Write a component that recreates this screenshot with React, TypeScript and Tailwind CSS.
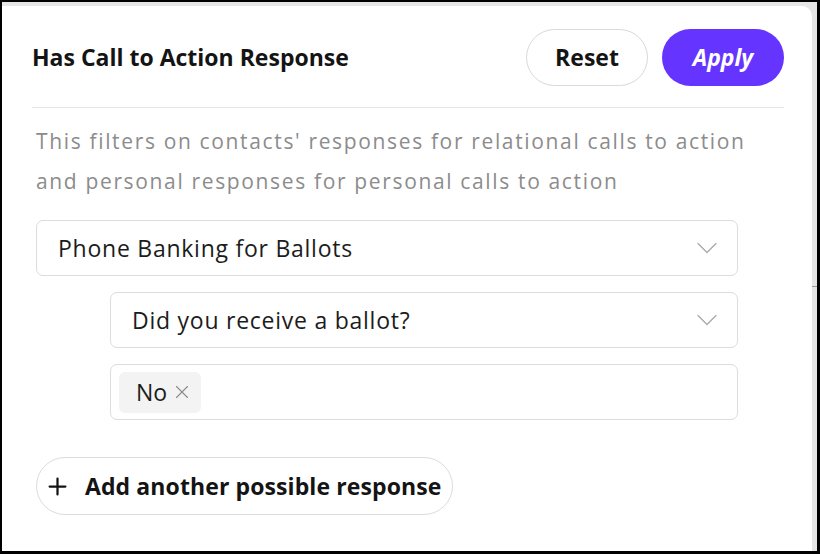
import { ChevronDown, Plus, X } from "lucide-react";

const font = { fontFamily: '"Open Sans", "Noto Sans", sans-serif' };

function Select({ label }: { label: string }) {
  return (
    <div className="h-[56px] flex items-center justify-between pl-[21px] pr-[12px] border border-[#dcdcdc] rounded-[7px] bg-white">
      <span className="text-[23px] tracking-[0.75px] text-[#1c1c1c]">{label}</span>
      <ChevronDown size={36} strokeWidth={0.8} className="text-[#a6a6a6]" />
    </div>
  );
}

export default function App() {
  return (
    <div className="w-[820px] h-[556px] bg-white" style={font}>
      <div className="w-[820px] h-[554px] border-l-2 border-t-2 border-r-[3px] border-b-[3px] border-black bg-[#e6e6e6] flex">
        {/* Card */}
        <div className="flex-1 mt-[4px] bg-white rounded-tr-[10px] flex flex-col pl-[30px] pr-[28px]">
          {/* Header */}
          <div className="flex items-center justify-between pt-[23px] pb-[21px] border-b border-[#e6e6e6]">
            <h1 className="text-[23px] font-bold text-[#141414]">Has Call to Action Response</h1>
            <div className="flex gap-[14px]">
              <button className="w-[122px] h-[57px] rounded-full border border-[#d9d9d9] text-[23px] font-bold text-[#141414]">
                Reset
              </button>
              <button className="w-[122px] h-[57px] rounded-full bg-[#6535ff] text-[23px] font-bold italic text-white">
                Apply
              </button>
            </div>
          </div>

          {/* Body */}
          <div className="ml-[4px] flex flex-col">
            <p className="mt-[13px] w-[740px] text-[21px] leading-[40px] tracking-[1.65px] text-[#8c8c8c]">
              This filters on contacts' responses for relational calls to action and personal responses for personal calls to action
            </p>
            <div className="mt-[19px] w-[702px] flex flex-col gap-[16px]">
              <Select label="Phone Banking for Ballots" />
              <div className="ml-[74px] flex flex-col gap-[16px]">
                <Select label="Did you receive a ballot?" />
                <div className="h-[56px] flex items-center px-[8px] border border-[#dcdcdc] rounded-[7px]">
                  <span className="h-[41px] flex items-center gap-[4px] pl-[17px] pr-[8px] rounded-[6px] bg-[#f3f3f3]">
                    <span className="text-[23px] text-[#1c1c1c]">No</span>
                    <X size={22} strokeWidth={1.2} className="text-[#8a8a8a]" />
                  </span>
                </div>
              </div>
            </div>
            <div className="mt-[37px]">
              <button className="h-[58px] flex items-center gap-[14px] pl-[7px] pr-[11px] rounded-full border border-[#dcdcdc]">
                <Plus size={27} strokeWidth={2} className="text-[#141414]" />
                <span className="text-[23px] font-bold text-[#141414] tracking-[0.1px]">Add another possible response</span>
              </button>
            </div>
          </div>
        </div>
        {/* Scroll track */}
        <div className="w-[5px] mt-[4px] flex flex-col">
          <div className="h-[280px]" />
          <div className="h-px bg-[#9a9a9a]" />
        </div>
      </div>
    </div>
  );
}
